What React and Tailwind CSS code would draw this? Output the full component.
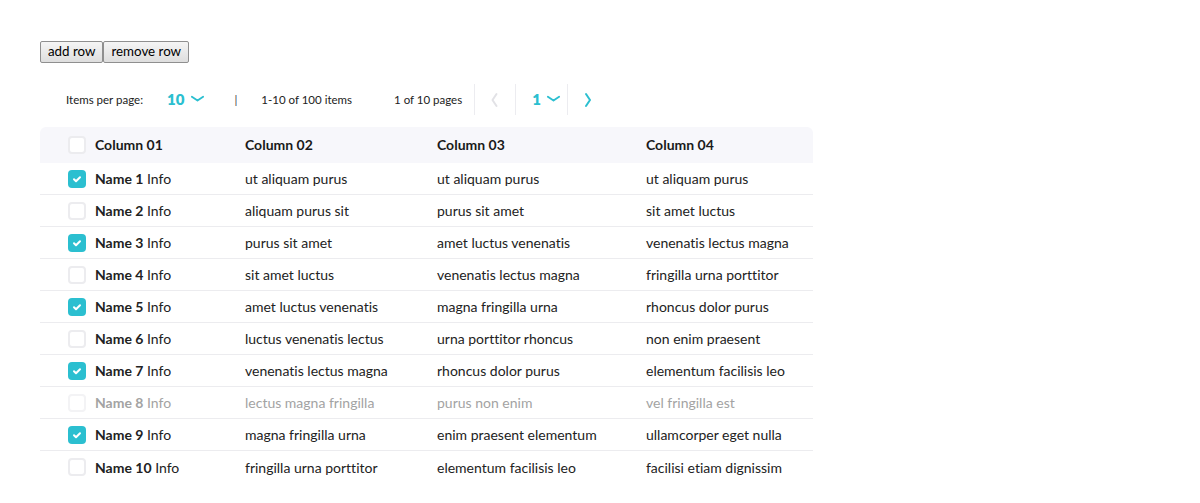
const rows = [
  ["Name 1", "ut aliquam purus", "ut aliquam purus", "ut aliquam purus", true],
  ["Name 2", "aliquam purus sit", "purus sit amet", "sit amet luctus", false],
  ["Name 3", "purus sit amet", "amet luctus venenatis", "venenatis lectus magna", true],
  ["Name 4", "sit amet luctus", "venenatis lectus magna", "fringilla urna porttitor", false],
  ["Name 5", "amet luctus venenatis", "magna fringilla urna", "rhoncus dolor purus", true],
  ["Name 6", "luctus venenatis lectus", "urna porttitor rhoncus", "non enim praesent", false],
  ["Name 7", "venenatis lectus magna", "rhoncus dolor purus", "elementum facilisis leo", true],
  ["Name 8", "lectus magna fringilla", "purus non enim", "vel fringilla est", false, true],
  ["Name 9", "magna fringilla urna", "enim praesent elementum", "ullamcorper eget nulla", true],
  ["Name 10", "fringilla urna porttitor", "elementum facilisis leo", "facilisi etiam dignissim", false],
];

const Chevron = ({ dir = "down", className }) => {
  const d = {
    down: "M2 5l6 4 6-4",
    left: "M9.5 2L5.5 8l4 6",
    right: "M6 2l4 6-4 6",
  }[dir];
  return (
    <svg viewBox="0 0 16 16" className={className} fill="none" stroke="currentColor" strokeWidth="2" strokeLinecap="round" strokeLinejoin="round">
      <path d={d} />
    </svg>
  );
};

const Box = ({ checked, disabled }) =>
  checked ? (
    <span className="flex size-[18px] items-center justify-center rounded-[4px] bg-[#2bbfd0] text-white">
      <svg viewBox="0 0 10 10" className="size-[10px]" fill="none" stroke="currentColor" strokeWidth="2" strokeLinecap="round" strokeLinejoin="round">
        <path d="M2 5.2l2 2 4-4" />
      </svg>
    </span>
  ) : (
    <span className={`size-[18px] rounded-[4px] border-2 bg-white ${disabled ? "border-[#f3f3f5]" : "border-[#ececef]"}`} />
  );

const grid = "grid grid-cols-[205px_192px_209px_1fr] items-center";

export default function App() {
  return (
    <div className="min-h-[503px] bg-white px-10 pt-[41px] font-['Lato',sans-serif] text-[#222] [font-variant-ligatures:none]">
      <div className="flex">
        <button className="h-[22px] rounded-[2px] border border-[#8f8f8f] bg-gradient-to-b from-[#f5f5f5] to-[#dedede] px-[7px] text-[13.33px] text-black">
          add row
        </button>
        <button className="h-[22px] rounded-[2px] border border-[#8f8f8f] bg-gradient-to-b from-[#f5f5f5] to-[#dedede] px-[7px] text-[13.33px] text-black">
          remove row
        </button>
      </div>

      <div className="mt-[21px] flex h-[31px] items-center text-[11.5px] text-[#222]">
        <span className="ml-[26px]">Items per page:</span>
        <span className="ml-[24px] flex items-center text-[15px] font-extrabold text-[#2bbfd0]">
          10
          <Chevron className="ml-[6px] size-[15px]" />
        </span>
        <span className="ml-[29px] text-[#444]">|</span>
        <span className="ml-[24px]">1-10 of 100 items</span>
        <span className="ml-[42px]">1 of 10 pages</span>
        <span className="ml-[12px] h-full border-l border-[#ececf0]" />
        <span className="flex w-[40px] justify-center text-[#e2e2e6]">
          <Chevron dir="left" className="size-[16px]" />
        </span>
        <span className="h-full border-l border-[#ececf0]" />
        <span className="flex w-[51px] items-center pl-[16px] text-[15px] font-extrabold text-[#2bbfd0]">
          1
          <Chevron className="ml-[5px] size-[15px]" />
        </span>
        <span className="h-full border-l border-[#ececf0]" />
        <span className="flex w-[40px] justify-center text-[#2bbfd0]">
          <Chevron dir="right" className="size-[16px]" />
        </span>
      </div>

      <div className="mt-[12px] w-[773px] text-[14px]">
        <div className={`${grid} h-[36px] rounded-t-[6px] bg-[#f7f7fb] pb-[1px] font-bold text-[#1a1a1a]`}>
          <div className="flex items-center gap-[9px] pl-[28px]">
            <Box />
            Column 01
          </div>
          <div>Column 02</div>
          <div>Column 03</div>
          <div>Column 04</div>
        </div>
        {rows.map(([name, a, b, c, checked, disabled], i) => (
          <div
            key={name}
            className={`${grid} h-[32px] ${i < rows.length - 1 ? "border-b border-[#ececef]" : ""} ${disabled ? "text-[#a3a3a3]" : "text-[#222]"}`}
          >
            <div className="flex items-center gap-[9px] pl-[28px]">
              <Box checked={checked} disabled={disabled} />
              <span>
                <b>{name}</b> Info
              </span>
            </div>
            <div>{a}</div>
            <div>{b}</div>
            <div>{c}</div>
          </div>
        ))}
      </div>
    </div>
  );
}
